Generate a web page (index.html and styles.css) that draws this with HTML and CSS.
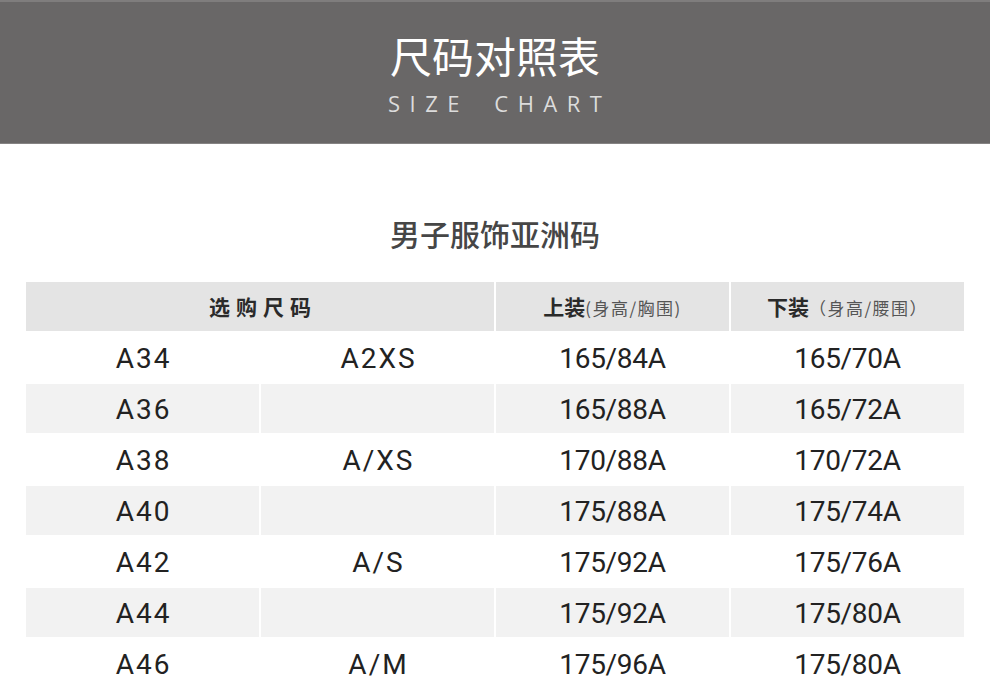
FILE: index.html
```html
<!DOCTYPE html>
<html lang="zh-CN">
<head>
<meta charset="utf-8">
<title>尺码对照表</title>
<link rel="stylesheet" href="styles.css">
</head>
<body>
<header class="banner">
  <h1 class="banner-title">尺码对照表</h1>
  <p class="banner-sub">SIZE CHART</p>
</header>
<main class="content">
  <h2 class="section-title">男子服饰亚洲码</h2>
  <div class="chart">
    <div class="cell head span2"><span class="head-main spaced">选购尺码</span></div>
    <div class="cell head"><span class="head-main">上装</span><span class="head-note">(身高/胸围)</span></div>
    <div class="cell head"><span class="head-main">下装</span><span class="head-note">（身高/腰围）</span></div>

    <div class="cell"><span class="num wide">A34</span></div>
    <div class="cell"><span class="num wide">A2XS</span></div>
    <div class="cell"><span class="num">165/84A</span></div>
    <div class="cell"><span class="num">165/70A</span></div>

    <div class="cell alt"><span class="num wide">A36</span></div>
    <div class="cell alt"></div>
    <div class="cell alt"><span class="num">165/88A</span></div>
    <div class="cell alt"><span class="num">165/72A</span></div>

    <div class="cell"><span class="num wide">A38</span></div>
    <div class="cell"><span class="num wide">A/XS</span></div>
    <div class="cell"><span class="num">170/88A</span></div>
    <div class="cell"><span class="num">170/72A</span></div>

    <div class="cell alt"><span class="num wide">A40</span></div>
    <div class="cell alt"></div>
    <div class="cell alt"><span class="num">175/88A</span></div>
    <div class="cell alt"><span class="num">175/74A</span></div>

    <div class="cell"><span class="num wide">A42</span></div>
    <div class="cell"><span class="num wide">A/S</span></div>
    <div class="cell"><span class="num">175/92A</span></div>
    <div class="cell"><span class="num">175/76A</span></div>

    <div class="cell alt"><span class="num wide">A44</span></div>
    <div class="cell alt"></div>
    <div class="cell alt"><span class="num">175/92A</span></div>
    <div class="cell alt"><span class="num">175/80A</span></div>

    <div class="cell"><span class="num wide">A46</span></div>
    <div class="cell"><span class="num wide">A/M</span></div>
    <div class="cell"><span class="num">175/96A</span></div>
    <div class="cell"><span class="num">175/80A</span></div>
  </div>
</main>
</body>
</html>
```

FILE: styles.css
```css
* { box-sizing: border-box; }

html, body {
  margin: 0;
  padding: 0;
  background: #ffffff;
}

body {
  width: 990px;
  font-family: "Noto Sans CJK SC", "Noto Sans", sans-serif;
  color: #222222;
}

.banner {
  height: 144px;
  background: #696767;
  border-top: 2px solid #7f7d7d;
  border-bottom: 1px solid #858383;
  display: flex;
  flex-direction: column;
  align-items: center;
  padding-top: 32px;
}

.banner-title {
  margin: 0;
  font-family: "Noto Sans CJK SC", sans-serif;
  font-weight: 400;
  font-size: 42px;
  line-height: 42px;
  color: #ffffff;
}

.banner-sub {
  margin: 16px 0 0;
  font-family: "Open Sans", "Noto Sans", sans-serif;
  font-size: 22px;
  line-height: 22px;
  letter-spacing: 9.5px;
  word-spacing: 10px;
  padding-left: 9.5px;
  color: #dcdcdc;
}

.content {
  display: flex;
  flex-direction: column;
  align-items: center;
}

.section-title {
  margin: 75px 0 0;
  font-family: "Noto Sans CJK SC", sans-serif;
  font-weight: 500;
  font-size: 30px;
  line-height: 29px;
  color: #464646;
}

.chart {
  margin-top: 34px;
  width: 938px;
  display: grid;
  grid-template-columns: repeat(4, 233px);
  grid-auto-rows: 49px;
  gap: 2px;
}

.cell {
  display: flex;
  align-items: center;
  justify-content: center;
  background: #ffffff;
  padding-top: 2px;
}

.cell.alt { background: #f2f2f2; }

.cell.head {
  background: #e4e4e4;
  align-items: baseline;
  padding-top: 11px;
}

.span2 { grid-column: span 2; }

.head-main {
  font-family: "Noto Sans CJK SC", sans-serif;
  font-weight: 700;
  font-size: 21px;
  line-height: 26px;
  color: #2a2a2a;
}

.head-main.spaced {
  letter-spacing: 6px;
  padding-left: 6px;
}

.head-note {
  font-family: "Noto Sans CJK SC", sans-serif;
  font-size: 17px;
  color: #555555;
  letter-spacing: 1.5px;
}

.num {
  font-family: Roboto, "Noto Sans", sans-serif;
  font-size: 28px;
  color: #222222;
  letter-spacing: -0.3px;
}

.num.wide {
  letter-spacing: 2px;
  padding-left: 2px;
}
```
